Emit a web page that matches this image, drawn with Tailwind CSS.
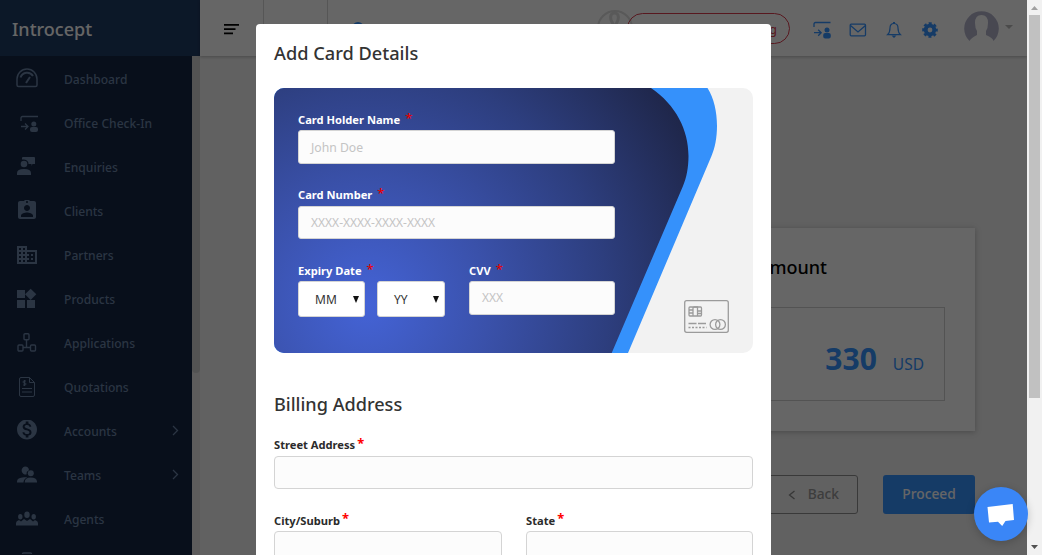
<!DOCTYPE html>
<html lang="en">
<head>
<meta charset="utf-8">
<title>Introcept</title>
<script src="https://cdn.jsdelivr.net/npm/@tailwindcss/browser@4"></script>
</head>
<body class="relative h-[555px] w-[1042px] overflow-hidden font-['Noto_Sans','Open_Sans',sans-serif]">

<div class="flex h-[555px] w-[1027px] overflow-hidden bg-[#f2f2f2]">
  <!-- Sidebar -->
  <aside class="flex w-[200px] shrink-0 flex-col bg-[#142644]">
    <div class="flex h-14 shrink-0 items-center pt-0.5 bg-[#203c64] pl-3 text-[18px] font-medium text-white">Introcept</div>
    <div class="flex min-h-0 flex-1">
      <nav class="flex w-48 flex-col overflow-hidden pt-0.5 text-[12.100px] font-medium text-[#6b84a7]">
        <a class="flex h-11 shrink-0 items-center pl-4"><svg class="h-6 w-6 shrink-0 mr-6" viewBox="0 0 24 24" fill="none" stroke="currentColor" stroke-width="1.5"><path d="M1 17V11a10 10 0 0 1 20 0v6q0 1.500-1.500 1.500H2.500Q1 18.500 1 17z"/><path d="M4.500 9.500a7 7 0 0 1 12.500-1.500M10 15l4-6" stroke-width="2"/></svg>Dashboard</a>
        <a class="flex h-11 shrink-0 items-center pl-4"><svg class="h-6 w-6 shrink-0 mr-6" viewBox="0 0 24 24" fill="none" stroke="currentColor" stroke-width="1.300"><path d="M5 9V6q0-1.500 1.500-1.500H22M5 14.500h6.500M9 11.500l3 3-3 3"/><circle cx="17.800" cy="12" r="2.500" fill="currentColor" stroke="none"/><path d="M14 18v-1q0-2 2-2h4q2 0 2 2v1q0 2-2 2h-4q-2 0-2-2z" fill="currentColor" stroke="none"/></svg>Office Check-In</a>
        <a class="flex h-11 shrink-0 items-center pl-4"><svg class="h-6 w-6 shrink-0 mr-6" viewBox="0 0 24 24" fill="currentColor"><circle cx="8" cy="8" r="3.300"/><path d="M1 19v-2q0-4 7-4t7 4v2zM6 2q0-1 1-1h11q1 0 1 1v6h-2.500L15.500 10V8H12.500Q12.500 4 8 3.500H6z"/></svg>Enquiries</a>
        <a class="flex h-11 shrink-0 items-center pl-4"><svg class="h-6 w-6 shrink-0 mr-6" viewBox="1 2 24 24" fill="currentColor"><path d="M19 3h-4.180C14.400 1.840 13.300 1 12 1c-1.300 0-2.400.84-2.820 2H5c-1.100 0-2 .9-2 2v14c0 1.100.9 2 2 2h14c1.100 0 2-.9 2-2V5c0-1.100-.9-2-2-2zm-7 0c.55 0 1 .45 1 1s-.45 1-1 1-1-.45-1-1 .45-1 1-1zm0 4c1.660 0 3 1.340 3 3s-1.340 3-3 3-3-1.340-3-3 1.340-3 3-3zm6 12H6v-1.400c0-2 4-3.100 6-3.100s6 1.100 6 3.100V19z"/></svg>Clients</a>
        <a class="flex h-11 shrink-0 items-center pl-4"><svg class="h-6 w-6 shrink-0 mr-6" viewBox="1 1 24 24" fill="currentColor"><path d="M12 7V3H2v18h20V7H12zM6 19H4v-2h2v2zm0-4H4v-2h2v2zm0-4H4V9h2v2zm0-4H4V5h2v2zm4 12H8v-2h2v2zm0-4H8v-2h2v2zm0-4H8V9h2v2zm0-4H8V5h2v2zm10 12h-8v-2h2v-2h-2v-2h2v-2h-2V9h8v10zm-2-8h-2v2h2v-2zm0 4h-2v2h2v-2z"/></svg>Partners</a>
        <a class="flex h-11 shrink-0 items-center pl-4"><svg class="h-6 w-6 shrink-0 mr-6" viewBox="2 1 24 24" fill="currentColor"><path d="M13 13v8h8v-8h-8zM3 21h8v-8H3v8zM3 3v8h8V3H3zm13.660-1.310L11 7.340 16.660 13l5.660-5.660-5.660-5.650z"/></svg>Products</a>
        <a class="flex h-11 shrink-0 items-center pl-4"><svg class="h-6 w-6 shrink-0 mr-6" viewBox="0 0 24 24" fill="none" stroke="currentColor" stroke-width="1.400"><rect x="8" y="1.700" width="5" height="6" rx="1"/><rect x="2" y="13" width="5" height="6" rx="1"/><rect x="14.500" y="13" width="5" height="6" rx="1"/><path d="M10.500 8v7.500M7 15.500h7.500"/></svg>Applications</a>
        <a class="flex h-11 shrink-0 items-center pl-4"><svg class="h-6 w-6 shrink-0 mr-6" viewBox="0 0 24 24" fill="none" stroke="currentColor"><path d="M5 1.500h8.500l5 5V19q0 1.500-1.500 1.500H5Q3.500 20.500 3.500 19V3Q3.500 1.500 5 1.500z"/><path d="M13.500 1.500v5h5M6 12.500h10M6 16h10M10 5H8Q7 5 7 6t1 1h1q1 0 1 1t-1 1H7M8.500 4v6"/></svg>Quotations</a>
        <a class="flex h-11 shrink-0 items-center pl-4"><svg class="h-6 w-6 shrink-0 mr-6" viewBox="1 2.500 24 24" fill="currentColor"><path d="M12 2C6.480 2 2 6.480 2 12s4.480 10 10 10 10-4.480 10-10S17.520 2 12 2zm1.410 16.090V20h-2.670v-1.930c-1.710-.36-3.160-1.460-3.270-3.400h1.960c.1 1.050.82 1.870 2.650 1.870 1.960 0 2.400-.98 2.400-1.590 0-.83-.44-1.610-2.670-2.140-2.480-.6-4.180-1.620-4.180-3.670 0-1.720 1.390-2.840 3.110-3.210V4h2.670v1.950c1.860.45 2.790 1.860 2.850 3.390H14.300c-.05-1.110-.64-1.870-2.220-1.870-1.500 0-2.400.68-2.400 1.640 0 .84.650 1.390 2.670 1.910s4.180 1.390 4.180 3.910c-.01 1.830-1.380 2.830-3.120 3.160z"/></svg>Accounts<svg class="ml-auto mr-3 mb-1 h-3 w-2.5" viewBox="0 0 10 12" fill="none" stroke="currentColor" stroke-width="1.300"><path d="M3 2l4.500 4.500-4.500 4.500"/></svg></a>
        <a class="flex h-11 shrink-0 items-center pl-4"><svg class="h-6 w-6 shrink-0 mr-6" viewBox="0 0 24 24" fill="currentColor"><path d="M9 2.500c2.500 0 4 1.700 4 3.800-1.700.7-2.800 2-2.300 4A4 4 0 1 1 9 2.500z"/><circle cx="14.800" cy="9.300" r="3"/><path d="M1 18.500v-1q0-4 7-4.300h3.500Q7.500 15 7.500 18.500zM8.700 18.500q0-5 6-5t6.300 4v1z"/></svg>Teams<svg class="ml-auto mr-3 mb-1 h-3 w-2.5" viewBox="0 0 10 12" fill="none" stroke="currentColor" stroke-width="1.300"><path d="M3 2l4.500 4.500-4.500 4.500"/></svg></a>
        <a class="flex h-11 shrink-0 items-center pl-4"><svg class="h-6 w-6 shrink-0 mr-6" viewBox="0 0 24 24" fill="currentColor"><ellipse cx="11" cy="6.700" rx="2.700" ry="3.300"/><ellipse cx="4.300" cy="8.700" rx="2.200" ry="2.700"/><ellipse cx="17.700" cy="8.700" rx="2.200" ry="2.700"/><path d="M0 17.500V15q0-2 3-3l2 1.500 3-2.500 3 2 3-2 3 2.500 2-1.500q3 1 3 3v2.500z"/></svg>Agents</a>
        <div class="flex h-3 shrink-0 items-start overflow-hidden pt-2.5 pl-[21px]"><svg class="h-2 w-3 shrink-0" viewBox="0 0 12 8" fill="none" stroke="#6b84a7" stroke-width="1.500"><path d="M1.500 8V2q0-1 1-1h7q1 0 1 1v6"/></svg></div>
      </nav>
      <div class="w-2 bg-[#e8e6e6]"><div class="h-[317px] rounded-b-[4px] bg-[#cfcfcf]"></div></div>
    </div>
  </aside>

  <!-- Page -->
  <main class="flex min-w-0 flex-1 flex-col">
    <header class="flex h-14 shrink-0 items-center bg-white shadow-[0_1px_3px_rgba(0,0,0,0.25)]">
      <svg class="mt-[3px] ml-6 h-[11px] w-[15px]" viewBox="0 0 15 11" fill="#000"><path d="M0 0h15v1.700H0zM0 4.300h11.500v1.700H0zM0 8.500h9v1.700H0z"/></svg>
      <div class="ml-6 h-14 w-[65px] border-x border-[#d8d8d8]"></div>
      <svg class="mt-1 ml-6 h-4 w-4" viewBox="0 0 16 16" fill="none" stroke="#3693ff" stroke-width="3"><circle cx="6" cy="6" r="4.500"/><path d="M10 10l5 5"/></svg>
      <div class="ml-auto flex h-full items-center">
        <svg class="h-9 w-9" viewBox="0 0 36 36" fill="none" stroke="#dedede" stroke-width="2"><circle cx="18" cy="18" r="17"/><path d="M12 30L21 10q1.500-7-3.500-7t-3.500 7l10 20" stroke-width="3"/></svg>
        <div class="-ml-1.5 flex h-[31px] w-[163px] items-center justify-end rounded-full border border-[#dc3d4f] pt-1 pr-3 text-[12.500px] text-[#dc3d4f]">Trial expiring</div>
        <div class="mt-1 flex items-center">
          <svg class="ml-[23px] h-5 w-[18px]" viewBox="0 0 18 20" fill="none" stroke="#3693ff" stroke-width="1.300"><path d="M1 7V4q0-1.500 1.500-1.500H17.500M1 12.700h6.500M5.200 9.700l3 3-3 3"/><circle cx="14" cy="10" r="2.500" fill="#3693ff" stroke="none"/><path d="M10.200 16.500V15q0-2 2-2h3.600q2 0 2 2v1.500q0 2-2 2h-3.600q-2 0-2-2z" fill="#3693ff" stroke="none"/></svg>
          <svg class="ml-[18px] h-3.5 w-[18px]" viewBox="0 0 18 14" fill="none" stroke="#3693ff" stroke-width="1.300"><rect x="1.200" y="1.200" width="15.300" height="11.600" rx="1"/><path d="M1.500 2.500L9 9l7.500-6.500"/></svg>
          <svg class="ml-[19px] h-4 w-4" viewBox="0 0 16 16" fill="none" stroke="#3693ff" stroke-width="1.200"><path d="M8 1.500c-3 0-4 2-4 4.500 0 4-1 5.500-2.500 6.700h13C13 11.500 12 10 12 6c0-2.500-1-4.500-4-4.500z"/><path d="M5.500 13.500h5L8 16zM7 0h2v2H7z" fill="#3693ff" stroke="none"/></svg>
          <svg class="ml-5 h-4 w-4" viewBox="0 0 16 16"><circle cx="8" cy="8" r="4.300" fill="none" stroke="#3693ff" stroke-width="3.800"/><circle cx="8" cy="8" r="6.800" fill="none" stroke="#3693ff" stroke-width="2" stroke-dasharray="3.100 2.240" stroke-dashoffset="1.550"/></svg>
        </div>
        <svg class="ml-[26px] h-9 w-[35px]" viewBox="0 0 35 36"><path d="M5.500 31A17.300 17.300 0 1 1 29.500 31Q29 28 22 25v-4q2-3 2-8 0-8-6.500-8T11 13q0 5 2 8v4Q7 28 5.500 31z" fill="#b4b4cb"/></svg>
        <div class="ml-1.5 mr-3.5 mb-0.5 border-x-[4px] border-t-[4px] border-x-transparent border-t-[#bbb]"></div>
      </div>
    </header>

    <section class="mt-[172px] mr-[52px] flex h-[203px] w-[350px] flex-col self-end bg-white pt-[23px] pr-[30px] pl-14 shadow-[0_1px_6px_rgba(0,0,0,0.25)]">
      <h2 class="flex h-8 w-[146px] items-center justify-end text-[18px] font-medium whitespace-nowrap text-black">Total Amount</h2>
      <div class="mt-6 flex h-[94px] items-baseline justify-end border border-[#cfcfcf] pt-[29px] pr-5 text-[#3693ff]">
        <span class="text-[30px] leading-[44px] font-bold">330</span><span class="ml-4 text-[15.500px]">USD</span>
      </div>
    </section>
    <div class="mt-11 mr-[52px] flex h-[39px] justify-end gap-[25px] text-[13.750px] font-medium">
      <div class="flex w-[106px] items-center justify-end rounded-[3px] border border-[#8f8f8f] pr-[18px] text-[#999]"><svg class="mr-3 h-2.5 w-2" viewBox="0 0 8 10" fill="none" stroke="#888" stroke-width="1.300"><path d="M6.500 1L1.500 5l5 4"/></svg>Back</div>
      <div class="flex w-[92px] items-center justify-center rounded-[3px] bg-[#3693ff] text-white">Proceed</div>
    </div>
  </main>
</div>

<div class="absolute inset-y-0 left-0 w-[1027px] bg-black/60"></div>

<!-- Dialog -->
<div class="absolute top-6 left-64 h-[531px] w-[515px] overflow-hidden rounded-t-[4px] bg-white px-[18px] text-[#333]">
  <h1 class="flex h-16 items-center pb-1 text-[18.200px] font-medium">Add Card Details</h1>
  <div class="relative h-[265px] w-[479px] overflow-hidden rounded-[10px] bg-[#f2f2f2]">
    <svg class="absolute inset-0 h-[265px] w-[479px]" viewBox="0 0 479 265">
      <defs><radialGradient id="g" gradientUnits="userSpaceOnUse" cx="93" cy="217" r="370"><stop offset="0" stop-color="#4463d6"/><stop offset=".33" stop-color="#3a51aa"/><stop offset=".65" stop-color="#2d3e7e"/><stop offset="1" stop-color="#1e2547"/></radialGradient></defs>
      <path fill="#3591fb" d="M0 0H433.500C440 10 443 24 443 38C443 49 441 60 437.500 68L354 265H0z"/>
      <path fill="url(#g)" d="M0 0H377C402 17 414.500 42 414.500 68C414.500 79 412.500 90 409 98L337.700 265H0z"/>
      <g fill="none" stroke="#9b9b9b" stroke-width="1.300"><rect x="410.700" y="212.700" width="43.600" height="31.600" rx="2"/><rect x="415" y="219" width="12.500" height="9" rx="1"/><path d="M415 222h4M415 225h4M419 219v9M419.500 219h4v9M423.500 223h4M423.500 225.500h4"/><path d="M414.500 235.500h8M424 235.500h8"/><path d="M414.500 239.500h18" stroke-dasharray="2 1.500"/><circle cx="441" cy="236.500" r="4.900"/><circle cx="446.500" cy="236.500" r="4.900"/></g>
    </svg>
    <div class="relative flex w-[341px] flex-col pt-[22px] pl-6 text-[11.150px] font-bold text-white">
      <label class="flex h-5 items-center">Card Holder Name<span class="mb-0.5 ml-[5px] text-[13px] font-medium text-[#e60000]">*</span></label>
      <div class="flex h-[34px] items-center rounded-[3px] border border-[#d4d4d4] bg-[#fcfcfc] pt-0.5 pl-3 text-[12.200px] font-normal text-[#c4c4c4]">John Doe</div>
      <label class="mt-[21px] mb-px flex h-5 items-center">Card Number<span class="mb-0.5 ml-[5px] text-[13px] font-medium text-[#e60000]">*</span></label>
      <div class="flex h-[33px] items-center rounded-[3px] border border-[#d4d4d4] bg-[#fcfcfc] pt-px pl-3 text-[12px] font-normal text-[#c4c4c4]">XXXX-XXXX-XXXX-XXXX</div>
      <div class="mt-[22px] flex">
        <div class="w-[171px]">
          <label class="flex h-5 items-center">Expiry Date<span class="mb-0.5 ml-[5px] text-[13px] font-medium text-[#e60000]">*</span></label>
          <div class="flex gap-3 text-[12px] font-normal text-[#333]">
            <div class="flex h-9 w-[67px] items-center justify-between rounded-[3px] border border-[#d4d4d4] bg-white pt-0.5 pr-[5px] pl-4">MM<svg class="mb-0.5 h-[7px] w-1.5" viewBox="0 0 6 7"><path d="M0 0h6L3 7z" fill="#111"/></svg></div>
            <div class="flex h-9 w-[68px] items-center justify-between rounded-[3px] border border-[#d4d4d4] bg-white pt-0.5 pr-[5px] pl-4">YY<svg class="mb-0.5 h-[7px] w-1.5" viewBox="0 0 6 7"><path d="M0 0h6L3 7z" fill="#111"/></svg></div>
          </div>
        </div>
        <div class="flex-1">
          <label class="flex h-5 items-center">CVV<span class="mb-0.5 ml-[5px] text-[13px] font-medium text-[#e60000]">*</span></label>
          <div class="flex h-[34px] items-center rounded-[3px] border border-[#d4d4d4] bg-[#fcfcfc] pl-3 text-[12px] font-normal text-[#c4c4c4]">XXX</div>
        </div>
      </div>
    </div>
  </div>
  <h2 class="mt-9 flex h-8 items-center text-[18.100px] font-medium">Billing Address</h2>
  <div class="text-[11.150px] font-bold text-[#2b2b2b]">
    <label class="mt-3.5 flex h-[21px] items-center">Street Address<span class="mb-1 ml-0.5 text-[13px] text-[#f00]">*</span></label>
    <div class="h-[33px] rounded-[4px] border border-[#d4d4d4] bg-[#fcfcfc]"></div>
    <div class="mt-[21px] flex gap-6">
      <div class="w-[228px]"><label class="flex h-[21px] items-center pt-px">City/Suburb<span class="mb-1 ml-0.5 text-[13px] text-[#f00]">*</span></label><div class="h-[33px] rounded-t-[4px] border border-[#d4d4d4] bg-[#fcfcfc]"></div></div>
      <div class="w-[227px]"><label class="flex h-[21px] items-center pt-px">State<span class="mb-1 ml-0.5 text-[13px] text-[#f00]">*</span></label><div class="h-[33px] rounded-t-[4px] border border-[#d4d4d4] bg-[#fcfcfc]"></div></div>
    </div>
  </div>
</div>

<!-- Window scrollbar -->
<div class="absolute inset-y-0 right-0 flex w-[15px] flex-col items-center bg-[#f1f1f1]">
  <svg class="h-[15px] w-[15px] shrink-0" viewBox="0 0 15 15"><path d="M4 10l3.500-4 3.500 4z" fill="#a0a0a0"/></svg>
  <div class="h-[383px] w-[11px] bg-[#c1c1c1]"></div>
  <svg class="mt-auto h-[15px] w-[15px] shrink-0" viewBox="0 0 15 15"><path d="M4 5h7l-3.500 4z" fill="#505050"/></svg>
</div>

<!-- Chat launcher -->
<div class="absolute top-[487px] left-[974px] flex h-[54px] w-[54px] items-center justify-center rounded-full bg-[#3a86f7] shadow-[0_2px_8px_rgba(0,0,0,0.2)]">
  <svg class="h-[54px] w-[54px]" viewBox="0 0 54 54"><path d="M13.500 20L38.700 17 40 33l-8.500 1-3.300 5-4.200-4.300-9 .8z" fill="#fff"/></svg>
</div>
</body>
</html>
